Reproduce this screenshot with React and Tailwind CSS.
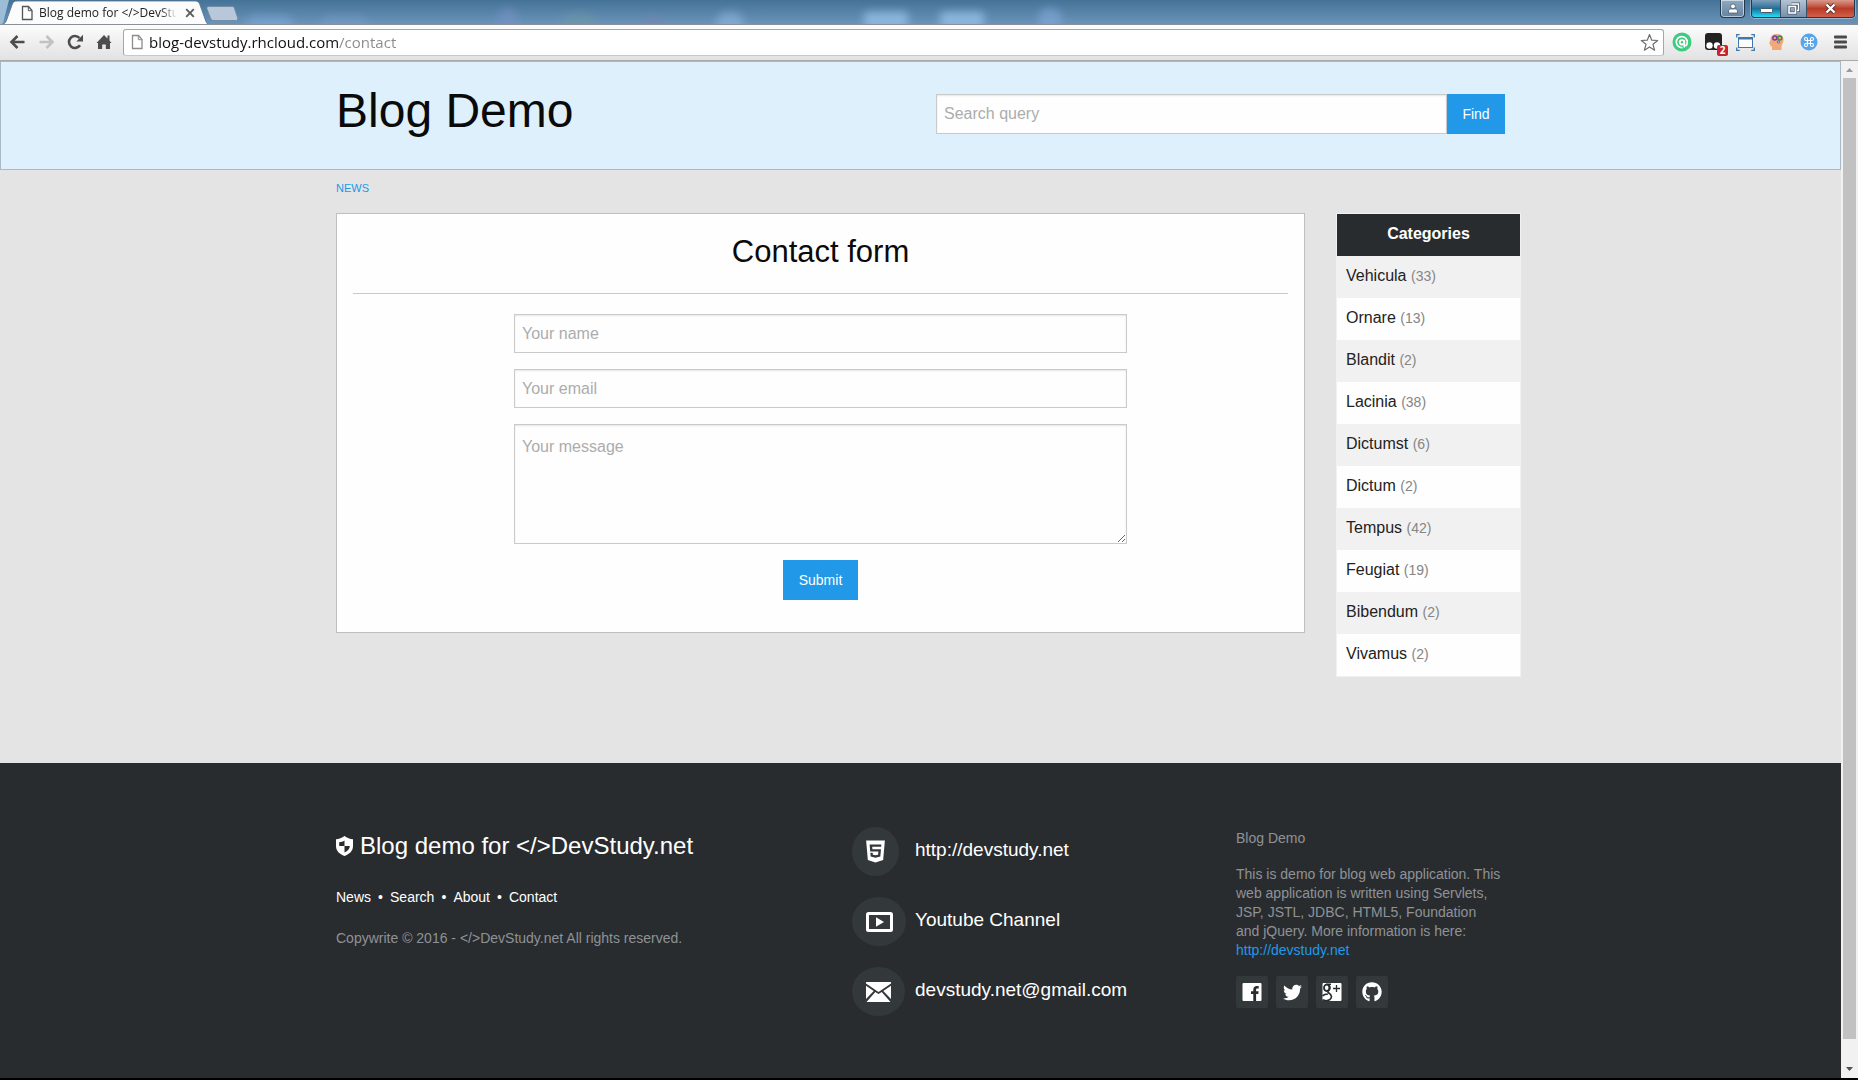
import React from "react";
import { FaHtml5, FaTwitter, FaGithub } from "react-icons/fa";

const categories = [
  ["Vehicula", 33],
  ["Ornare", 13],
  ["Blandit", 2],
  ["Lacinia", 38],
  ["Dictumst", 6],
  ["Dictum", 2],
  ["Tempus", 42],
  ["Feugiat", 19],
  ["Bibendum", 2],
  ["Vivamus", 2],
];

function PageIcon({ stroke }) {
  return (
    <svg width="12" height="16" viewBox="0 0 12 16" fill="#fff" stroke={stroke} aria-hidden="true">
      <path d="M1.5 1.5h6l3.5 4v9H1.500z" strokeWidth="1.3" />
      <path d="M7.300 1.500v4.200h3.500" fill="none" />
    </svg>
  );
}

function TitleBar() {
  return (
    <div className="relative flex h-[25px] items-start overflow-hidden border-b border-[#8a8f98] bg-linear-to-b from-[#457397] to-[#6a93b9]">
      <div className="absolute left-[498px] top-2 h-6 w-5 rounded-full bg-[#7c93cc] opacity-50 blur-xs" />
      <div className="absolute left-[560px] top-3 h-6 w-9 rounded-full bg-[#7a9f9c] opacity-30 blur-xs" />
      <div className="absolute left-[640px] top-4 h-5 w-6 rounded-full bg-[#7c82ac] opacity-40 blur-xs" />
      <div className="absolute left-[716px] top-3 h-6 w-7 rounded-full bg-[#8fb6e0] opacity-60 blur-xs" />
      <div className="absolute left-[864px] top-3 h-4 w-11 rounded bg-[#8fbbe2] opacity-90 blur-xs" />
      <div className="absolute left-[940px] top-3 h-4 w-11 rounded bg-[#8fbbe2] opacity-90 blur-xs" />
      <div className="absolute left-[1038px] top-2 h-6 w-6 rounded-full bg-[#84a9dc] opacity-60 blur-xs" />
      <div className="absolute left-[246px] top-4 h-5 w-12 rounded-full bg-[#7fa8dc] opacity-60 blur-xs" />
      <div className="absolute left-[320px] top-4 h-5 w-12 rounded-full bg-[#7f9fd4] opacity-40 blur-xs" />
      <div className="relative flex h-[25px] w-[210px] items-center pl-[21px] pt-px">
        <svg className="absolute left-0 top-0" width="210" height="25" viewBox="0 0 210 25" aria-hidden="true">
          <path d="M0 25V0h9L3 23z" fill="#9dbcd6" />
          <path d="M1 25c4-1 5-3 6-6l5-14c1-3 2-4 5-4h178c3 0 4 1 5 4l5 14c1 3 2 5 4 6z" fill="#fcfcfc" stroke="#56718c" strokeWidth=".8" />
        </svg>
        <div className="relative flex items-center">
          <PageIcon stroke="#555" />
          <span className="ml-1.5 w-[138px] overflow-hidden whitespace-nowrap text-[12px] leading-4 text-[#222] [mask-image:linear-gradient(to_right,black_88%,transparent)]">
            Blog demo for &lt;/&gt;DevStu
          </span>
          <button type="button" aria-label="Close tab" className="ml-2">
            <svg width="10" height="10" viewBox="0 0 10 10" stroke="#5c5c5c" strokeWidth="1.900">
              <path d="M1.200 1.200l7.600 7.600M8.800 1.200L1.200 8.800" />
            </svg>
          </button>
        </div>
      </div>
      <button type="button" aria-label="New tab" className="relative -ml-1 mt-1.5">
        <svg width="32" height="15" viewBox="0 0 32 15">
          <path d="M3 .5h22c2 0 3 0 3.500 2l3 9c.5 2 0 3-2 3H8c-2 0-3-1-3.500-2.500L1 3C.5 1.500 1 .5 3 .5z" fill="#b8c8da" stroke="#6d86a0" strokeWidth=".8" />
        </svg>
      </button>
      <div className="relative ml-auto flex items-start pr-[3px]">
        <button type="button" aria-label="User" className="mr-1.5 flex h-[18px] w-[25px] items-center justify-center rounded-b border border-t-0 border-[#22384d] bg-linear-to-b from-[#8fa9c2] to-[#64829f] shadow-[inset_0_0_0_1px_rgba(255,255,255,0.55)]">
          <svg width="12" height="11" viewBox="0 0 12 11" fill="#fff" stroke="#3c5064" strokeWidth=".7">
            <path d="M1.500 10V8C1.500 6.500 3 6 4.500 6h3c1.500 0 3 .5 3 2v2z" />
            <circle cx="6" cy="3.300" r="2.400" />
          </svg>
        </button>
        <div className="flex h-[18px] w-[104px] overflow-hidden rounded-b border border-t-0 border-[#22384d] shadow-[0_0_0_1px_rgba(255,255,255,0.35)]">
          <button type="button" aria-label="Minimize" className="flex w-7 items-end justify-center bg-linear-to-b from-[#7fa0bc] via-[#1c6f98] to-[#1fe0f8] pb-1">
            <svg width="13" height="5" viewBox="0 0 13 5">
              <rect x=".5" y=".5" width="12" height="4" rx="1" fill="#fff" stroke="#49596a" />
            </svg>
          </button>
          <button type="button" aria-label="Restore" className="flex w-[27px] items-center justify-center border-x border-[#3c5064] bg-linear-to-b from-[#b4c3d2] to-[#7591ad]">
            <svg width="13" height="13" viewBox="0 0 13 13" fill="none">
              <path d="M4.500 2h7v6.500h-2" stroke="#49596a" strokeWidth="3" />
              <path d="M4.500 2h7v6.500h-2" stroke="#fff" strokeWidth="1.400" />
              <rect x="2" y="4.500" width="6.500" height="6.500" stroke="#49596a" strokeWidth="3" />
              <rect x="2" y="4.500" width="6.500" height="6.500" stroke="#fff" strokeWidth="1.600" />
            </svg>
          </button>
          <button type="button" aria-label="Close" className="flex flex-1 items-center justify-center bg-linear-to-b from-[#d99a8c] via-[#b93a26] to-[#d0604a]">
            <svg width="13" height="11" viewBox="0 0 13 11" fill="none">
              <path d="M2.500 1.500l8 8M10.500 1.500l-8 8" stroke="#50302c" strokeWidth="4" />
              <path d="M2.500 1.500l8 8M10.500 1.500l-8 8" stroke="#fff" strokeWidth="2.400" />
            </svg>
          </button>
        </div>
      </div>
    </div>
  );
}

function Toolbar() {
  return (
    <div className="flex h-9 items-center border-b border-[#a9a9a9] bg-linear-to-b from-[#fcfcfc] to-[#e2e2e2] pb-px pl-[9px] pr-2.5">
      <button type="button" aria-label="Back">
        <svg width="16" height="16" viewBox="0 0 16 16" fill="none" stroke="#4d4d4d" strokeWidth="2.600">
          <path d="M15.500 8H3M8.500 2L2.500 8l6 6" />
        </svg>
      </button>
      <button type="button" aria-label="Forward" className="ml-3.5">
        <svg width="16" height="16" viewBox="0 0 16 16" fill="none" stroke="#c2c2c2" strokeWidth="2.600">
          <path d="M.5 8H13M7.500 2l6 6-6 6" />
        </svg>
      </button>
      <button type="button" aria-label="Reload" className="ml-3">
        <svg width="17" height="16" viewBox="0 0 17 16" fill="none">
          <path d="M13 11.300A6 6 0 1 1 12.500 4" stroke="#4d4d4d" strokeWidth="2.600" />
          <path d="M16 .8v6.700H9.300z" fill="#4d4d4d" />
        </svg>
      </button>
      <button type="button" aria-label="Home" className="ml-3">
        <svg width="16" height="16" viewBox="0 0 16 16" fill="#4d4d4d">
          <path d="M8 1l3.500 3.400V1.500h2v5L15.500 9H14v6H9.800v-4.500H6.200V15H2V9H.5z" />
        </svg>
      </button>
      <div className="ml-[11px] flex h-[27px] flex-1 items-center rounded-[3px] border border-[#a6a6a6] border-b-[#c8c8c8] bg-white pl-[7px] pr-1">
        <PageIcon stroke="#8c8c8c" />
        <input
          aria-label="Address"
          defaultValue="blog-devstudy.rhcloud.com/contact"
          className="ml-1.5 min-w-0 flex-1 bg-[linear-gradient(to_right,#111_190px,#8a8a8a_190px)] bg-clip-text text-[15px] leading-5 text-transparent outline-none"
        />
        <button type="button" aria-label="Bookmark this page">
          <svg width="19" height="19" viewBox="0 0 19 19" fill="#fff" stroke="#6e6e6e" strokeWidth="1.200">
            <path d="M9.500 1.500l2.200 5.700 6 .3-4.700 3.800 1.600 5.900-5.100-3.300-5.100 3.300L6 11.300 1.300 7.500l6-.3z" strokeLinejoin="round" />
          </svg>
        </button>
      </div>
      <div className="ml-2 flex items-center gap-[13px]">
        <button type="button" aria-label="Answers extension">
          <svg width="20" height="20" viewBox="0 0 20 20" fill="none">
            <circle cx="10" cy="10" r="9.500" fill="#3ccb7f" />
            <path d="M10.500 15.500A5.500 5.500 0 1 1 15.300 10c0 1.800-.6 3-1.800 4.200" stroke="#fff" strokeWidth="1.700" />
            <circle cx="10" cy="10.300" r="2.200" stroke="#fff" strokeWidth="1.900" />
            <path d="M12.300 8v7.500" stroke="#fff" strokeWidth="1.700" />
          </svg>
        </button>
        <button type="button" aria-label="Script extension, 2 active" className="relative">
          <svg width="18" height="18" viewBox="0 0 18 18">
            <rect width="17" height="17" rx="3" fill="#222" />
            <circle cx="4.500" cy="12.500" r="3.200" fill="#fff" />
            <circle cx="12" cy="12.500" r="3.200" fill="#fff" />
          </svg>
          <span className="absolute -bottom-[5px] -right-[5px] h-[11px] w-[11px] rounded-xs bg-[#c8232b] text-center text-[10px] font-bold leading-[11px] text-white">2</span>
        </button>
        <button type="button" aria-label="Screen capture extension">
          <svg width="19" height="17" viewBox="0 0 19 17" fill="none" stroke="#3f78ad">
            <path d="M.7 3.500V.7h3M15.300.7h3v2.800M18.300 13.500v2.800h-3M3.700 16.300h-3v-2.800" strokeWidth="1.300" />
            <rect x="2.500" y="3.500" width="14" height="10" fill="#fdfdfd" />
            <path d="M2.500 4.500h14" strokeWidth="2" />
          </svg>
        </button>
        <button type="button" aria-label="Mind extension">
          <svg width="18" height="18" viewBox="0 0 18 18">
            <path d="M4 17v-3.500H2.500l-.3-2.300L1 10.500 2.500 7C2.300 3 5 1 9 1s6.500 2.500 6.500 6c0 3-2 4.500-2 6.500V17z" fill="#f0a878" />
            <circle cx="6.800" cy="5" r="2" fill="none" stroke="#6b3fa8" strokeWidth="1.500" />
            <circle cx="11.800" cy="5" r="2" fill="none" stroke="#3d8a3a" strokeWidth="1.500" />
            <circle cx="10.500" cy="8.800" r="1.200" fill="none" stroke="#4a6fc0" />
          </svg>
        </button>
        <button type="button" aria-label="Shortcut extension" className="ml-px">
          <svg width="18" height="18" viewBox="0 0 18 18" fill="none">
            <circle cx="9" cy="9" r="8.500" fill="#5aa5ea" />
            <path d="M7.500 7.500h3v3h-3zM7.500 7.500H6A1.500 1.500 0 1 1 7.500 6zM10.500 7.500V6A1.500 1.500 0 1 1 12 7.500zM7.500 10.500V12A1.500 1.500 0 1 1 6 10.500zM10.500 10.500H12a1.500 1.500 0 1 1-1.500 1.500z" stroke="#fff" strokeWidth="1.100" />
          </svg>
        </button>
        <button type="button" aria-label="Menu" className="ml-[3px]">
          <svg width="14" height="14" viewBox="0 0 14 14" fill="#4a4a4a">
            <rect y=".5" width="13" height="3" rx="1" />
            <rect y="5.500" width="13" height="3" rx="1" />
            <rect y="10.500" width="13" height="3" rx="1" />
          </svg>
        </button>
      </div>
    </div>
  );
}

function Header() {
  return (
    <header className="border border-[#a9b8c4] bg-[#def0fc] pb-6 pt-4">
      <div className="mx-auto flex max-w-[1201px] items-start justify-between px-4">
        <h1 className="text-[48px] leading-[66px] text-[#0a0a0a]">Blog Demo</h1>
        <form className="mb-[11px] mt-4 flex w-[569px]" onSubmit={(e) => e.preventDefault()}>
          <input
            type="search"
            aria-label="Search query"
            placeholder="Search query"
            className="h-10 min-w-0 flex-1 border border-[#cacaca] bg-[#fefefe] px-[7px] text-base shadow-[inset_0_1px_2px_rgba(10,10,10,0.1)] outline-none placeholder:text-[#acacac]"
          />
          <button type="submit" className="h-10 w-[58px] bg-[#2199e8] text-[14px] text-white">
            Find
          </button>
        </form>
      </div>
    </header>
  );
}

const field =
  "block w-full border border-[#cacaca] bg-[#fefefe] px-[7px] text-base shadow-[inset_0_1px_2px_rgba(10,10,10,0.1)] outline-none placeholder:text-[#acacac]";

function ContactCard() {
  return (
    <section className="min-w-0 flex-1 border border-[#bfbfbf] bg-[#fefefe] p-4">
      <h2 className="text-center text-[31px] leading-[43px] text-[#0a0a0a]">Contact form</h2>
      <hr className="my-5 border-[#cacaca]" />
      <form className="mx-auto flex w-full max-w-[613px] flex-col gap-4 pb-4" onSubmit={(e) => e.preventDefault()}>
        <input type="text" aria-label="Your name" placeholder="Your name" className={field + " h-[39px]"} />
        <input type="email" aria-label="Your email" placeholder="Your email" className={field + " h-[39px]"} />
        <textarea aria-label="Your message" placeholder="Your message" className={field + " h-[120px] resize-y py-2 leading-7"} />
        <button type="submit" className="h-10 w-[75px] self-center bg-[#2199e8] text-[14px] text-white">
          Submit
        </button>
      </form>
    </section>
  );
}

function Categories() {
  return (
    <aside className="w-[185px] border border-[#f1f1f1] bg-[#fefefe]">
      <h2 className="bg-[#292c2f] px-[9px] pb-2.5 pt-2 text-center text-base font-bold leading-6 text-white">Categories</h2>
      <ul>
        {categories.map(([name, count]) => (
          <li key={name} className="odd:bg-[#f1f1f1]">
            <a href="#" className="block px-[9px] pb-2.5 pt-2 text-base leading-6 text-[#222]">
              {name} <span className="text-[14px] text-[#858585]">({count})</span>
            </a>
          </li>
        ))}
      </ul>
    </aside>
  );
}

function PlayIcon() {
  return (
    <svg width="27" height="20" viewBox="0 0 27 20" aria-hidden="true">
      <rect x="1.500" y="1.500" width="24" height="17" rx="1" fill="none" stroke="#fff" strokeWidth="3" />
      <path d="M10 5.200v9.600l8-4.800z" fill="#fff" />
    </svg>
  );
}

function MailIcon() {
  return (
    <svg width="25" height="20" viewBox="0 0 25 20" fill="#fff" aria-hidden="true">
      <path d="M0 0h25v1.500L12.500 10 0 1.500z" />
      <path d="M0 3.700l7.700 5.200L0 17zM25 3.700l-7.700 5.200L25 17z" />
      <path d="M9.300 10l3.200 2.100 3.200-2.100 8.800 10H.5z" />
    </svg>
  );
}

const contacts = [
  { label: "http://devstudy.net", icon: <FaHtml5 size={25} color="#fff" className="-mx-[3px]" />, box: "w-[47px]" },
  { label: "Youtube Channel", icon: <PlayIcon />, box: "w-[54px]" },
  { label: "devstudy.net@gmail.com", icon: <MailIcon />, box: "w-[53px]" },
];

const socials = [
  {
    label: "Facebook",
    icon: (
      <svg width="20" height="20" viewBox="0 0 20 20">
        <rect x=".5" y="1" width="19" height="18" rx="1" fill="#fff" />
        <path d="M11.300 19v-7H9V9.300h2.300V7.500c0-2.400 1.400-3.600 3.500-3.600h1.900v2.600h-1.300c-1 0-1.300.5-1.300 1.300v1.500h2.500l-.3 2.700h-2.200v7z" fill="#292c2f" />
      </svg>
    ),
  },
  { label: "Twitter", icon: <FaTwitter size={19} color="#fff" /> },
  {
    label: "Google Plus",
    icon: (
      <svg width="20" height="20" viewBox="0 0 20 20" fill="none" stroke="#292c2f">
        <rect x=".5" y="1" width="19" height="18" rx="1" fill="#fff" stroke="none" />
        <path d="M14.500 3v7M11 6.500h7" strokeWidth="1.300" />
        <ellipse cx="4.700" cy="5.800" rx="2.700" ry="3.200" strokeWidth="1.800" />
        <path d="M4 2.200h5M6.500 3c2 1.500 2 4 .3 5.300-1.300 1-1.300 1.800 0 2.700 3 2 3.500 4.500 1.200 6.500M6 12c-2.500 0-4.500.8-5.500 2M.5 17.800c2.500 1.200 5.500 1 7.500-.3" strokeWidth="1.600" />
      </svg>
    ),
  },
  { label: "GitHub", icon: <FaGithub size={20} color="#fff" /> },
];

function Footer() {
  return (
    <footer className="bg-[#292c2f] pb-[62px] pt-16 text-[14px] leading-[19px] text-[#8f9296]">
      <div className="mx-auto flex max-w-[1201px] px-4">
        <div className="w-[516px]">
          <h3 className="flex items-center text-[24px] leading-[38px] text-white">
            <svg className="mr-[7px]" width="17" height="20" viewBox="0 0 17 20" aria-hidden="true">
              <path d="M8.500 0C11 2 14 3 17 3.200V10c0 5-3.500 8-8.500 10C3.500 18 0 15 0 10V3.200C3 3 6 2 8.500 0z" fill="#fff" />
              <path d="M8.500 4.500V10H3.200V6.200C5.200 6 7 5.500 8.500 4.500zM8.500 10h5.300c0 3-2 5-5.300 6.500z" fill="#292c2f" />
            </svg>
            Blog demo for &lt;/&gt;DevStudy.net
          </h3>
          <nav aria-label="Footer" className="mt-[23px] flex text-white">
            {["News", "Search", "About", "Contact"].map((item, i) => (
              <React.Fragment key={item}>
                {i > 0 && <span className="w-[19px] text-center">•</span>}
                <a href="#">{item}</a>
              </React.Fragment>
            ))}
          </nav>
          <p className="mt-[22px]">Copywrite © 2016 - &lt;/&gt;DevStudy.net All rights reserved.</p>
        </div>
        <ul className="flex w-[384px] flex-col gap-[21px]">
          {contacts.map((c) => (
            <li key={c.label} className="flex items-center">
              <span className="w-[63px]">
                <span className={"flex h-[49px] items-center justify-center rounded-[50%] bg-[#33383b] " + c.box}>{c.icon}</span>
              </span>
              <a href="#" className="pb-1 text-[19px] leading-6 text-white">
                {c.label}
              </a>
            </li>
          ))}
        </ul>
        <div className="min-w-0 flex-1 pt-0.5">
          <h4>Blog Demo</h4>
          <p className="mt-[17px]">
            This is demo for blog web application. This
            <br />
            web application is written using Servlets,
            <br />
            JSP, JSTL, JDBC, HTML5, Foundation
            <br />
            and jQuery. More information is here:
            <br />
            <a href="#" className="text-[#2199e8]">
              http://devstudy.net
            </a>
          </p>
          <div className="mt-4 flex gap-2">
            {socials.map((s) => (
              <a key={s.label} href="#" aria-label={s.label} className="flex size-8 items-center justify-center rounded-xs bg-[#33383b]">
                {s.icon}
              </a>
            ))}
          </div>
        </div>
      </div>
    </footer>
  );
}

function Scrollbar() {
  return (
    <div className="flex w-[17px] shrink-0 flex-col items-center bg-[#f1f1f1]">
      <svg width="17" height="17" viewBox="0 0 17 17" aria-hidden="true">
        <path d="M5 11l3.500-4 3.500 4z" fill="#9a9a9a" />
      </svg>
      <div className="w-[13px] flex-1 bg-[#c1c1c1]" />
      <svg className="mt-[22px]" width="17" height="17" viewBox="0 0 17 17" aria-hidden="true">
        <path d="M5 6l3.500 4L12 6z" fill="#505050" />
      </svg>
    </div>
  );
}

export default function App() {
  return (
    <div className="flex min-h-screen flex-col border-b-2 border-black bg-white font-['Open_Sans',sans-serif]">
      <TitleBar />
      <Toolbar />
      <div className="flex flex-1">
        <div className="flex min-w-0 flex-1 flex-col bg-[#e4e4e4] font-['Liberation_Sans',Arial,sans-serif]">
          <Header />
          <main className="mx-auto w-full max-w-[1201px] flex-1 pb-10 pl-4">
            <nav aria-label="Sections" className="pb-[19px] pt-[13px] text-[11px] leading-[11px]">
              <a href="#" className="block uppercase text-[#2199e8]">
                News
              </a>
            </nav>
            <div className="flex items-start gap-[31px]">
              <ContactCard />
              <Categories />
            </div>
          </main>
          <Footer />
        </div>
        <Scrollbar />
      </div>
    </div>
  );
}
